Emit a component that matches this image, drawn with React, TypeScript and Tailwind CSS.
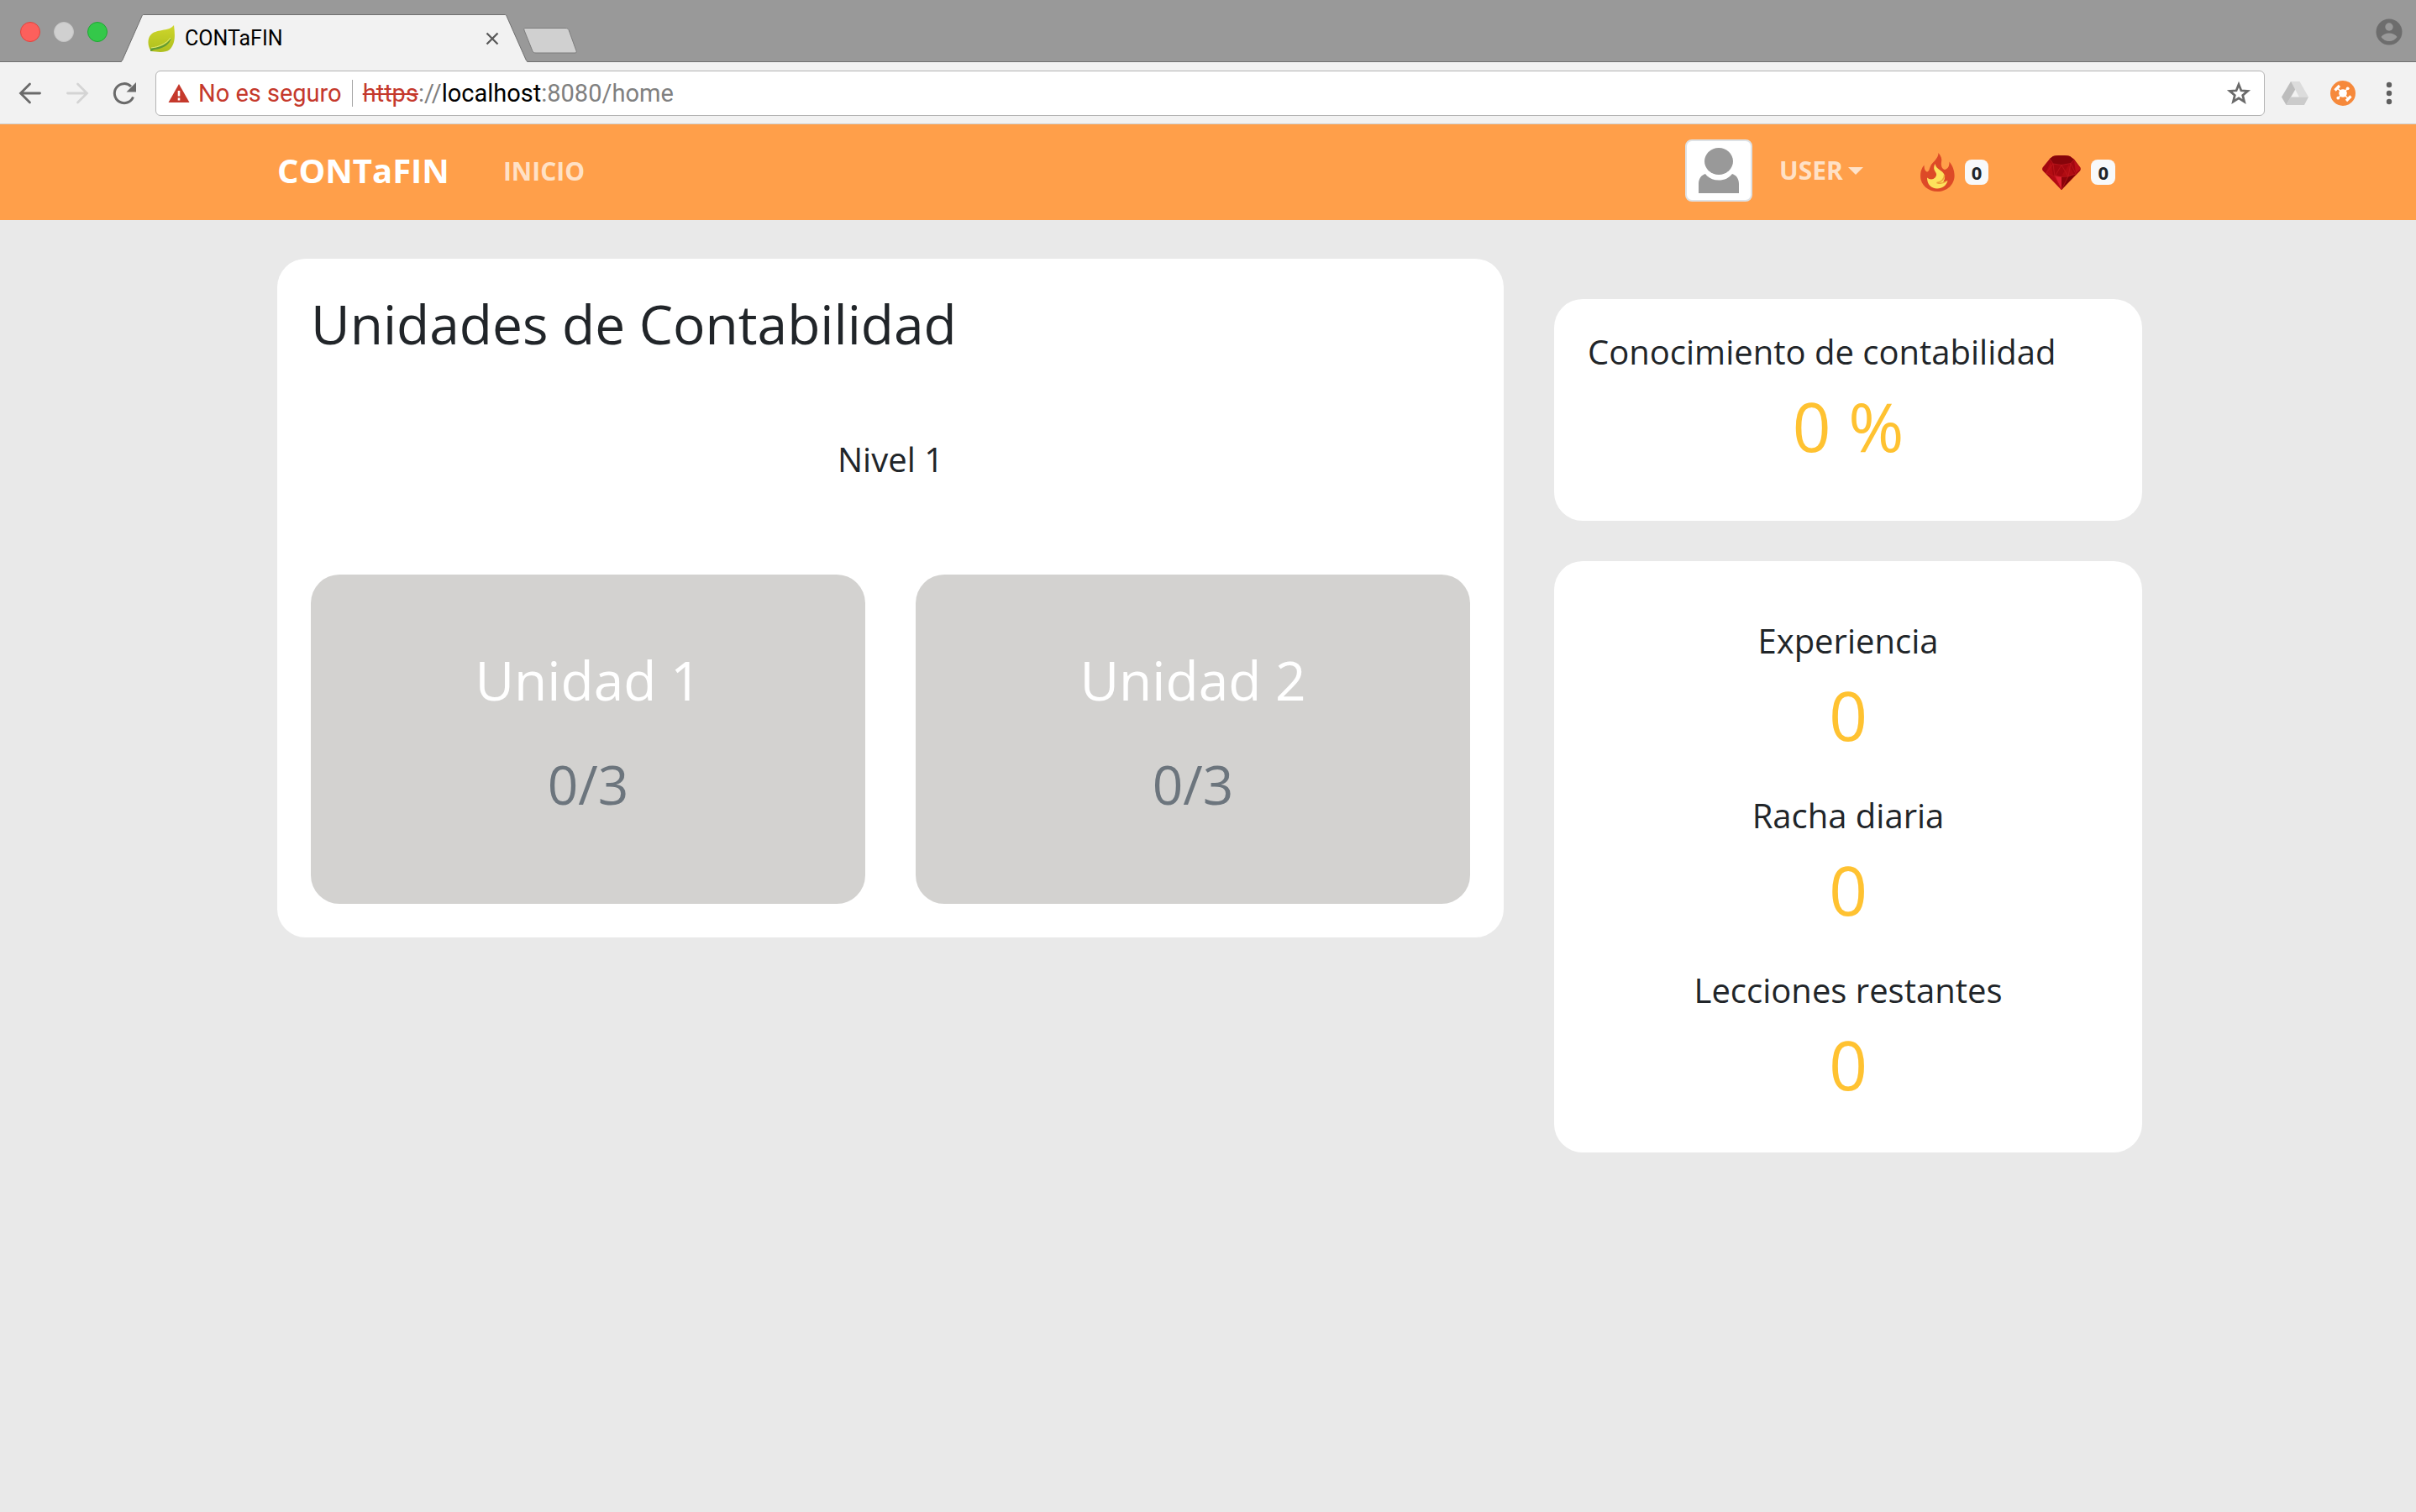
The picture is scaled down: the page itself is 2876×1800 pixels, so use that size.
import React from 'react';

function WindowButtons() {
  return (
    <div className="flex gap-4 pt-[26px] pl-6">
      <button aria-label="Cerrar ventana" className="size-6 rounded-full border border-[#e0443e] bg-[#fc605c]" />
      <button aria-label="Minimizar" className="size-6 rounded-full border border-[#c4c4c4] bg-[#d0d0d0]" />
      <button aria-label="Maximizar" className="size-6 rounded-full border border-[#1fa833] bg-[#34c84a]" />
    </div>
  );
}

function Leaf() {
  return (
    <svg viewBox="0 0 32 32" className="size-8">
      <defs>
        <linearGradient id="leaf" x1="0" y1="0" x2="0" y2="1">
          <stop offset="0" stopColor="#cfd62b" />
          <stop offset="1" stopColor="#aebf1e" />
        </linearGradient>
      </defs>
      <path d="M31 0C32.500 12 33 22 26 29c-5 4-14 3-22 2C0 26-1 17 3 12 9 4 25 8 31 0z" fill="url(#leaf)" />
      <path d="M3 31c0-2 .3-3 1-4 10 0 19-4 24-12-2 8-10 13-20 14-2 .5-3 2-5 2z" fill="#5f9a36" />
      <path d="M4 27c9-1 18-5 23-12" stroke="#e4ea7a" strokeWidth="1" fill="none" />
    </svg>
  );
}

function TabStrip() {
  return (
    <div className="flex h-[74px] justify-between border-b border-[#6f6f6f] bg-[#999999]">
      <div className="flex">
        <WindowButtons />
        <div className="relative -mb-px ml-4 flex h-[57px] w-[484px] items-center self-end pr-[34px] pl-8">
          <svg viewBox="0 0 484 57" className="absolute inset-0 h-full w-full">
            <path d="M0 57c1-1 1.500-2 2-3L25 2c.5-1 1-1.500 2-1.500H457c1 0 1.500.5 2 1.500l23 52c.5 1 1 2 2 3z" fill="#f2f2f2" />
            <path d="M0 56.500c1-.5 1.500-1.500 2-2.500L25 2c.5-1 1-1.500 2-1.500H457c1 0 1.500.5 2 1.500l23 52c.5 1 1 2 2 2.500" fill="none" stroke="#6f6f6f" />
          </svg>
          <span className="relative"><Leaf /></span>
          <span className="relative ml-3 grow text-[25px] leading-8 text-black">CONTaFIN</span>
          <button aria-label="Cerrar pestaña" className="relative">
            <svg viewBox="0 0 16 16" className="size-4" stroke="#5a5a5a" strokeWidth="2.300"><path d="M1.500 1.500l13 13M14.500 1.500l-13 13" /></svg>
          </button>
        </div>
        <button aria-label="Nueva pestaña" className="mt-8 -ml-1.5 h-8">
          <svg viewBox="0 0 66 32" className="h-8 w-[66px]">
            <path d="M3 1.500h48c2 0 3 .5 4 2l9 25c.5 2 0 2.500-2 2.500H16c-2 0-3-.5-4-2L2 4c-.5-2 0-2.500 1-2.500z" fill="#d0d0d0" stroke="#7d7d7d" />
          </svg>
        </button>
      </div>
      <button aria-label="Perfil" className="mt-[22px] mr-4 size-8">
        <svg viewBox="0 0 32 32" className="size-8">
          <circle cx="16" cy="16" r="15.500" fill="#6d6d6d" />
          <circle cx="16" cy="10" r="4.700" fill="#999" />
          <path d="M6.500 22c2-3 5.500-4.500 9.500-4.500s7.500 1.500 9.500 4.500c-2 3-5.500 5-9.500 5s-7.500-2-9.500-5z" fill="#999" />
        </svg>
      </button>
    </div>
  );
}

function Toolbar() {
  return (
    <div className="flex h-[74px] items-center border-b border-[#cfcfcf] bg-[#f2f2f2] pr-4 pl-5">
      <button aria-label="Atrás">
        <svg viewBox="0 0 32 32" className="size-8" fill="none" stroke="#6a6a6a" strokeWidth="2.800" strokeLinecap="round"><path d="M27.500 16H5M15.500 5L4.500 16l11 11" /></svg>
      </button>
      <button aria-label="Adelante" className="ml-6">
        <svg viewBox="0 0 32 32" className="size-8" fill="none" stroke="#d4d4d4" strokeWidth="2.800" strokeLinecap="round"><path d="M4.500 16H27M16.500 5l11 11-11 11" /></svg>
      </button>
      <button aria-label="Recargar" className="ml-6">
        <svg viewBox="0 0 32 32" className="size-8" fill="none" stroke="#6a6a6a" strokeWidth="3">
          <path d="M26.500 20.500A11.500 11.500 0 1 1 24 8" />
          <path d="M30 3v11.500H18.500z" fill="#6a6a6a" stroke="none" />
        </svg>
      </button>
      <div className="ml-[21px] flex h-[54px] grow items-center rounded-md border border-[#b4b4b4] bg-white px-3.5 text-[29px] leading-9">
        <svg viewBox="0 0 26 24" className="h-6 w-[26px]"><path d="M13 1L25.500 23H.5z" fill="#c5392c" /><path d="M13 9v6.500M13 17.500v3" stroke="#fff" strokeWidth="2.600" /></svg>
        <span className="ml-2.5 text-[#c5392c]">No es seguro</span>
        <span className="mx-3 h-8 w-px bg-[#a6a6a6]" />
        <span className="grow text-[#808080]">
          <span className="text-[#c5392c] line-through">https</span>://<span className="text-black">localhost</span>:8080/home
        </span>
        <button aria-label="Añadir a marcadores">
          <svg viewBox="0 0 32 32" className="size-8" fill="none" stroke="#6a6a6a" strokeWidth="2.700">
            <path d="M16 5.500l2.900 7.300 7.800.6-6 5 1.900 7.600-6.600-4.100-6.600 4.100 1.900-7.600-6-5 7.800-.6z" />
          </svg>
        </button>
      </div>
      <svg viewBox="0 0 32 28" className="ml-5 h-7 w-8">
        <path d="M11 0h10.500L16.300 9.500 5.500 28 0 18.500z" fill="#bdbdbd" />
        <path d="M11 0h10.500L32 18.500H21z" fill="#dcdcdc" />
        <path d="M10.700 18.500H32L27 28H5.500z" fill="#cbcbcb" />
      </svg>
      <svg viewBox="0 0 30 30" className="ml-[26px] size-[30px]">
        <circle cx="15" cy="15" r="15" fill="#f6893b" />
        <circle cx="15" cy="15" r="4.800" fill="#fff" />
        <path d="M8.500 9L21 21M20.500 9.500l-11.500 11.500" stroke="#fff" strokeWidth="1.500" />
        <path d="M5.500 11.500l5.500-5.500M19 24l5.500-5.500" stroke="#fff" strokeWidth="3.200" />
        <circle cx="20.700" cy="9.300" r="1.900" fill="#fff" /><circle cx="9.300" cy="20.700" r="1.900" fill="#fff" />
      </svg>
      <button aria-label="Menú" className="ml-6">
        <svg viewBox="0 0 32 32" className="size-8" fill="#5f5f5f"><circle cx="16" cy="6" r="3.200" /><circle cx="16" cy="16" r="3.200" /><circle cx="16" cy="26" r="3.200" /></svg>
      </button>
    </div>
  );
}

function Flame() {
  return (
    <svg viewBox="0 0 41 46" className="h-[46px] w-[41px]">
      <path d="M21.500 0c3 4 4.500 7 3.500 11-.6 4 .5 8 4 9 4-1 5.500-4 5.500-9.500C38 15 40.500 20 40.600 27 40.600 38 31.500 46 20.500 46S.3 38.500.1 28C0 22.500 1.500 18 4.500 14.500c0 4 1 7.500 3.500 8 3-.5 2.500-4.500 5-8.500C16 10 21.500 6 21.500 0z" fill="#dd4a27" />
      <path d="M17.500 13c1 5 5 6.500 8.500 9.500 4 4 4 8.500 1 12 2 .2 4-.5 5.500-1.500C31 39 26 42.500 20 42.500 13 42.500 8 37.500 8 29.500c3 2.500 7 2.500 9.500 0 3.500-4 .5-6-1-9.500-.8-2.500 0-5 1-7z" fill="#fde25c" />
      <path d="M28.500 26c.5 5-4 9-9 9.500 4 1.500 8.500.5 12-2" stroke="#eda23a" strokeWidth="1.400" fill="none" />
    </svg>
  );
}

function Gem() {
  return (
    <svg viewBox="0 0 46 41" className="h-[41px] w-[46px]">
      <path d="M13 1C18-.3 28-.3 33 1l5 3.500 7.500 10c.5 1.500.3 3-.5 4L23 41 1 18.500C0 17.500-.2 16 .5 14.500L9 4z" fill="#a3070f" />
      <path d="M13 1c5-1.300 15-1.300 20 0l4.500 4L34 9.500l-11 2-10-1.500L9 4z" fill="#86040a" />
      <path d="M38 6l2 15 5-4.500v-2z" fill="#bd1118" />
      <path d="M10 8l-6 13 9 4L11 10z" fill="#b50c13" />
      <path d="M15 24l8 1.500V41z" fill="#de2030" />
      <path d="M7 24l8 1 8 16z" fill="#b30a14" />
      <path d="M23 25.500l8-.5-8 16z" fill="#8c040a" />
      <path d="M31 25l9-3-17 19z" fill="#7b0307" />
      <path d="M32 11l6 12-7 2-8-1z" fill="#b00c12" />
      <path d="M9 4l4 6 10 1.500L34 9.500 38 5M13 10L4 22M13 10l2 15 8-13.500L31 25l3-15.500L40 22M4 21l11 4 8 .5 8-.5 9-3M15 25l8 16 8-16" stroke="#c31a20" strokeWidth=".7" fill="none" />
    </svg>
  );
}

function Badge({ value }: { value: number }) {
  return <span className="rounded-lg bg-[#f8f9fa] px-2 text-[22px] leading-[30px] font-bold text-[#212529]">{value}</span>;
}

function Navbar() {
  return (
    <nav className="bg-[#ff9f4a] pr-[326px] pl-[330px] font-['Open_Sans',sans-serif]">
      <div className="flex h-[114px] items-center">
        <div className="flex items-center pb-1">
          <a href="#" className="text-[40px] leading-[60px] font-bold text-white">CONTaFIN</a>
          <a href="#" className="ml-16 pt-0.5 text-[30px] leading-[48px] font-bold text-white/70">INICIO</a>
        </div>
        <div className="ml-auto flex items-center pr-8">
          <div className="flex items-center pb-1">
            <span className="flex h-[74px] w-20 flex-none items-center justify-center rounded-lg border-2 border-[#dee2e6] bg-white">
              <svg viewBox="0 0 48 54" className="h-[54px] w-12" fill="#999999">
                <ellipse cx="24" cy="16" rx="17" ry="16" />
                <path d="M0 54V43c0-6 3-10.500 8-12 4 5 9 7.500 16 7.500s12-2.500 16-7.500c5 1.500 8 6 8 12v11z" />
              </svg>
            </span>
            <button className="ml-8 flex items-center gap-1.5 text-[30px] leading-[48px] font-bold text-white/70">
              USER
              <svg viewBox="0 0 18 9" className="h-[9px] w-[18px]" fill="currentColor"><path d="M0 0h18L9 9z" /></svg>
            </button>
          </div>
          <a href="#" className="ml-[68px] flex items-center gap-3"><Flame /><Badge value={0} /></a>
          <a href="#" className="ml-16 flex items-center gap-3"><Gem /><Badge value={0} /></a>
        </div>
      </div>
    </nav>
  );
}

function Unit({ name, progress }: { name: string; progress: string }) {
  return (
    <a href="#" className="flex flex-1 flex-col items-center gap-12 rounded-[34px] bg-[#d3d2d0] pt-[88px] pb-[104px] text-[64px] leading-[76px]">
      <span className="font-medium text-white">{name}</span>
      <span className="text-[#6c757d]">{progress}</span>
    </a>
  );
}

function Stat({ label, value }: { label: string; value: string }) {
  return (
    <div>
      <h2 className="text-[40px] leading-[48px]">{label}</h2>
      <p className="mt-4 text-center text-[80px] leading-[96px] text-[#ffc231]">{value}</p>
    </div>
  );
}

export default function App() {
  return (
    <div className="min-h-screen bg-[#e9e9e9] font-[Roboto,sans-serif]">
      <header>
        <TabStrip />
        <Toolbar />
      </header>
      <Navbar />
      <main className="flex items-start gap-[60px] pt-[46px] pr-[326px] pl-[330px] font-['Open_Sans',sans-serif] text-[#212529]">
        <section className="grow rounded-[34px] bg-white p-10">
          <h1 className="text-[64px] leading-[76px]">Unidades de Contabilidad</h1>
          <h2 className="mt-[99px] text-center text-[40px] leading-[48px]">Nivel 1</h2>
          <div className="mt-[113px] flex gap-[60px]">
            <Unit name="Unidad 1" progress="0/3" />
            <Unit name="Unidad 2" progress="0/3" />
          </div>
        </section>
        <aside className="mt-12 flex w-[700px] flex-none flex-col gap-12">
          <section className="rounded-[34px] bg-white px-10 pt-[39px] pb-[65px]">
            <Stat label="Conocimiento de contabilidad" value="0 %" />
          </section>
          <section className="flex flex-col gap-12 rounded-[34px] bg-white px-10 pt-[71px] pb-[57px] text-center">
            <Stat label="Experiencia" value="0" />
            <Stat label="Racha diaria" value="0" />
            <Stat label="Lecciones restantes" value="0" />
          </section>
        </aside>
      </main>
    </div>
  );
}
